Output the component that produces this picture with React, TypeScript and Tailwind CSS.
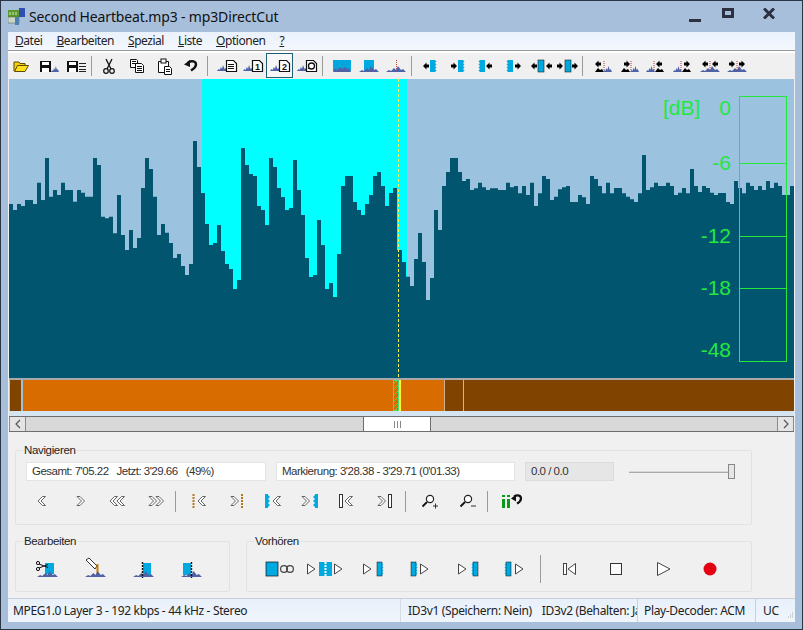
import React from "react";

const A = [222,240,222,228,210,210,222,158,210,84,200,180,195,158,180,180,215,180,188,200,200,84,105,260,265,260,310,195,315,360,300,354,324,174,84,117,200,315,282,308,339,384,372,408,435,402,33,111,189,282,345,339,285,363,402,417,477,450,54,105,132,138,228,240,285,84,111,174,201,240,234,90,180,255,384,441,435,270,345,477,459,501,372,168,138,138,216,240,255,222,195,138,126,168,228,189,174];
const B = [396,440,468,387,309,396,510,444,240,300,168,126,84,84,126,153,147,180,175,158,172,180,175,175,180,180,158,172,168,190,168,195,158,228,190,138,147,210,200,178,172,168,216,216,195,202,222,138,147,168,190,158,190,174,174,190,200,208,216,190,75,180,172,158,168,168,158,168,195,188,174,190,117,168,186,168,174,188,195,189,189,216,222,153,174,190,158,168,180,168,180,153,174,158,168,195,195,168];

function wavePath() {
  let d = "M9 378";
  A.forEach((z, i) => {
    const y = 130 + z / 3;
    d += `V${y}H${9 + 4 * (i + 1)}`;
  });
  d += `V250H402`;
  B.forEach((z, i) => {
    const y = 130 + z / 3;
    d += `V${y}H${402 + 4 * (i + 1)}`;
  });
  d += "V378Z";
  return d;
}

const BLUE = "#00a9e0";
const WAVE = "#4f62a6";

function Ico({ children, w = 26, h = 20 }: { children: React.ReactNode; w?: number; h?: number }) {
  return (
    <svg width={w} height={h} viewBox={`0 0 ${w} ${h}`} className="block shrink-0">
      {children}
    </svg>
  );
}

function W({ x, y, w = 10, c = WAVE }: { x: number; y: number; w?: number; c?: string }) {
  const s = w / 10;
  return (
    <path
      d={`M${x} ${y}l${1.5 * s} -2l${1 * s} 1l${1.5 * s} -3l${1 * s} 2l${1 * s} -4l${1.5 * s} 4l${1 * s} -1l${1.5 * s} 3L${x + w} ${y}z`}
      fill={c}
    />
  );
}

function Floppy({ x, y }: { x: number; y: number }) {
  return (
    <g>
      <rect x={x} y={y} width={11} height={11} fill="#111" />
      <rect x={x + 2} y={y + 1} width={7} height={3} fill="#fff" />
      <rect x={x + 2} y={y + 7} width={7} height={4} fill="#fff" />
    </g>
  );
}

function Doc({ x, y, n }: { x: number; y: number; n?: string }) {
  return (
    <g>
      <path d={`M${x + 0.5} ${y + 0.5}h7l3 3v8h-10z`} fill="#fff" stroke="#111" strokeWidth="1.2" />
      {n ? (
        <text x={x + 5.5} y={y + 9.5} fontSize="9" fontWeight="700" textAnchor="middle" fontFamily="Liberation Sans, sans-serif" fill="#111">
          {n}
        </text>
      ) : (
        <path d={`M${x + 2} ${y + 4.5}h6M${x + 2} ${y + 6.5}h6M${x + 2} ${y + 8.5}h6`} stroke="#111" />
      )}
    </g>
  );
}

function Arrow({ x, y, dir }: { x: number; y: number; dir: "l" | "r" }) {
  return dir === "l" ? (
    <path d={`M${x} ${y}l3.5 -3.5v2h2.500v3h-2.500v2z`} fill="#000" />
  ) : (
    <path d={`M${x} ${y}l-3.5 -3.5v2h-2.500v3h2.500v2z`} fill="#000" />
  );
}

function Jag({ x, y, h = 12, side }: { x: number; y: number; h?: number; side: "l" | "r" }) {
  return (
    <g>
      <rect x={x} y={y} width={5} height={h} fill={BLUE} />
      {side === "r" &&
        [0, 3, 6, 9].map((k) => <path key={k} d={`M${x + 5} ${y + k}l1.5 1.5l-1.5 1.5z`} fill={BLUE} />)}
      {side === "l" &&
        [0, 3, 6, 9].map((k) => <path key={k} d={`M${x} ${y + k}l-1.5 1.5l1.5 1.5z`} fill={BLUE} />)}
    </g>
  );
}

const tb: Record<string, React.ReactNode> = {
  open: (
    <Ico>
      <path d="M6 15V6h5l1 1.5h5V10" fill="#f3cf10" stroke="#5b4a00" />
      <path d="M6.5 15.5l3-6h11l-3.5 6z" fill="#ffe020" stroke="#5b4a00" />
    </Ico>
  ),
  saveW: (
    <Ico>
      <Floppy x={5} y={5} />
      <W x={16} y={16} w={8} />
    </Ico>
  ),
  saveL: (
    <Ico>
      <Floppy x={5} y={5} />
      <path d="M17 7.5h7M17 10.5h7M17 13.5h7M17 15.5h7" stroke="#222" />
    </Ico>
  ),
  cut: (
    <Ico>
      <path d="M10 3l5 10M16 3l-5 10" stroke="#111" strokeWidth="1.3" fill="none" />
      <circle cx="10" cy="15" r="2.3" fill="none" stroke="#111" strokeWidth="1.2" />
      <circle cx="16" cy="15" r="2.3" fill="none" stroke="#111" strokeWidth="1.2" />
    </Ico>
  ),
  copy: (
    <Ico>
      <path d="M6.5 3.5h6l1 1v7h-7z" fill="#fff" stroke="#111" />
      <path d="M8 5.5h4M8 7.5h4" stroke="#111" />
      <path d="M11.5 7.5h6l2 2v7h-8z" fill="#fff" stroke="#111" />
      <path d="M13 10.5h5M13 12.5h5M13 14.5h5" stroke="#111" />
    </Ico>
  ),
  paste: (
    <Ico>
      <path d="M6.5 5.5h10v11h-10z" fill="#fff" stroke="#111" />
      <rect x="9" y="3" width="5" height="4" fill="#fff" stroke="#111" />
      <path d="M12.5 10.5h5l2 2v6h-7z" fill="#fff" stroke="#111" />
      <path d="M14 13.5h4M14 15.5h4" stroke="#111" />
    </Ico>
  ),
  undo: (
    <Ico>
      <path d="M10 6.5c4 -2.5 8 -1 8 2c0 3 -3 4.5 -5 6" fill="none" stroke="#111" strokeWidth="2.4" />
      <path d="M6 8.5l6 -4.5v7z" fill="#111" />
    </Ico>
  ),
  d0: (<Ico><W x={3} y={15} /><Doc x={12} y={4} /></Ico>),
  d1: (<Ico><W x={3} y={15} /><Doc x={12} y={4} n="1" /></Ico>),
  d2: (<Ico><W x={3} y={15} /><Doc x={12} y={4} n="2" /></Ico>),
  d3: (
    <Ico>
      <W x={3} y={15} />
      <Doc x={12} y={4} />
      <circle cx="17.5" cy="10" r="3" fill="#fff" stroke="#111" strokeWidth="1.3" />
    </Ico>
  ),
  s0: (
    <Ico>
      <rect x="4" y="4" width="18" height="11" fill={BLUE} />
      <path d="M4 16l2 -4 2 2 3 -3 2 2 3 -2 2 2 2 -1 2 4z" fill={WAVE} />
      <path d="M8 4v10M13 4v10M18 4v10" stroke="#2787c5" strokeDasharray="1 1" />
    </Ico>
  ),
  s1: (
    <Ico>
      <rect x="8" y="4" width="10" height="11" fill={BLUE} />
      <W x={3} y={16} w={20} />
    </Ico>
  ),
  s2: (
    <Ico>
      <path d="M13.5 4v11" stroke="#c0392b" strokeDasharray="1 1" />
      <W x={3} y={16} w={20} />
    </Ico>
  ),
  a1: (<Ico><Arrow x={7} y={10} dir="l" /><Jag x={14} y={4} side="r" /></Ico>),
  a2: (<Ico><Arrow x={14} y={10} dir="r" /><Jag x={15} y={4} side="r" /></Ico>),
  a3: (<Ico><Jag x={8} y={4} side="l" /><Arrow x={14} y={10} dir="l" /></Ico>),
  a4: (<Ico><Jag x={7} y={4} side="l" /><Arrow x={20} y={10} dir="r" /></Ico>),
  a5: (
    <Ico>
      <Arrow x={3} y={10} dir="l" />
      <rect x="10" y="4" width="6" height="12" fill={BLUE} stroke="#222" strokeWidth="0.6" />
      <Arrow x={18} y={10} dir="l" />
    </Ico>
  ),
  a6: (
    <Ico>
      <Arrow x={8} y={10} dir="r" />
      <rect x="10" y="4" width="6" height="12" fill={BLUE} stroke="#222" strokeWidth="0.6" />
      <Arrow x={23} y={10} dir="r" />
    </Ico>
  ),
  m1: (<Ico><Arrow x={6} y={8} dir="l" /><path d="M6 16l3 -4 2 2 2 -1 2 3z" fill="#000" /><W x={14} y={16} w={9} /><path d="M15 5v9" stroke="#c0392b" strokeDasharray="1 1" /></Ico>),
  m2: (<Ico><Arrow x={14} y={8} dir="r" /><path d="M5 16l3 -4 2 2 2 -1 2 3z" fill="#000" /><W x={14} y={16} w={9} /><path d="M15 5v9" stroke="#c0392b" strokeDasharray="1 1" /></Ico>),
  m3: (<Ico><W x={3} y={16} w={9} /><path d="M11 5v9" stroke="#c0392b" strokeDasharray="1 1" /><Arrow x={13} y={8} dir="l" /><path d="M12 16l3 -4 2 2 2 -1 2 3z" fill="#000" /></Ico>),
  m4: (<Ico><W x={3} y={16} w={9} /><path d="M11 5v9" stroke="#c0392b" strokeDasharray="1 1" /><Arrow x={20} y={8} dir="r" /><path d="M12 16l3 -4 2 2 2 -1 2 3z" fill="#000" /></Ico>),
  m5: (<Ico><W x={3} y={16} w={20} /><path d="M13 5v9" stroke="#c0392b" strokeDasharray="1 1" /><Arrow x={5} y={8} dir="l" /><Arrow x={15} y={8} dir="l" /></Ico>),
  m6: (<Ico><W x={3} y={16} w={20} /><path d="M13 5v9" stroke="#c0392b" strokeDasharray="1 1" /><Arrow x={11} y={8} dir="r" /><Arrow x={21} y={8} dir="r" /></Ico>),
};

function Sep({ h = 20, ml = 0, mr = 0 }: { h?: number; ml?: number; mr?: number }) {
  return <div className="w-[1px] bg-[#9a9a9a] shrink-0" style={{ height: h, marginLeft: ml, marginRight: mr }} />;
}

function TB({ k, w = 27, sel }: { k: string; w?: number; sel?: boolean }) {
  return (
    <div
      className={
        sel
          ? "h-[25px] flex items-center justify-center shrink-0 border border-[#1f5f78] bg-[#f6f6f6]"
          : "h-[25px] flex items-center justify-center shrink-0"
      }
      style={{ width: w }}
    >
      {tb[k]}
    </div>
  );
}

function Chev({ x, y, dir }: { x: number; y: number; dir: "l" | "r" }) {
  const d =
    dir === "l"
      ? `M${x + 4.5} ${y - 4.5}L${x} ${y}L${x + 4.5} ${y + 4.5}H${x + 7.5}L${x + 3} ${y}L${x + 7.5} ${y - 4.5}z`
      : `M${x + 3} ${y - 4.5}L${x + 7.5} ${y}L${x + 3} ${y + 4.5}H${x}L${x + 4.5} ${y}L${x} ${y - 4.5}z`;
  return <path d={d} fill="#fff" stroke="#555" strokeWidth="0.9" />;
}

function Play({ x, y, s = 5 }: { x: number; y: number; s?: number }) {
  return <path d={`M${x + 0.5} ${y - s}L${x + 1.6 * s} ${y}L${x + 0.5} ${y + s}z`} fill="#fff" stroke="#444" />;
}

const nav: React.ReactNode[] = [
  <Ico key="0" w={30}><Chev x={11} y={10} dir="l" /></Ico>,
  <Ico key="1" w={30}><Chev x={12} y={10} dir="r" /></Ico>,
  <Ico key="2" w={30}><Chev x={7} y={10} dir="l" /><Chev x={14} y={10} dir="l" /></Ico>,
  <Ico key="3" w={30}><Chev x={8} y={10} dir="r" /><Chev x={15} y={10} dir="r" /></Ico>,
];
const nav2: React.ReactNode[] = [
  <Ico key="0" w={30}><path d="M9.5 3v14" stroke="#b5771c" strokeWidth="2" strokeDasharray="2 1" /><Chev x={14} y={10} dir="l" /></Ico>,
  <Ico key="1" w={30}><Chev x={10} y={10} dir="r" /><path d="M21 3v14" stroke="#b5771c" strokeWidth="2" strokeDasharray="2 1" /></Ico>,
  <Ico key="2" w={30}><rect x="7" y="3" width="3" height="14" fill={BLUE} /><path d="M10 4l2 2-2 2 2 2-2 2 2 2-2 2z" fill={BLUE} /><Chev x={15} y={10} dir="l" /></Ico>,
  <Ico key="3" w={30}><Chev x={7} y={10} dir="r" /><rect x="20" y="3" width="3" height="14" fill={BLUE} /><path d="M20 4l-2 2 2 2-2 2 2 2-2 2 2 2z" fill={BLUE} /></Ico>,
  <Ico key="4" w={30}><rect x="7.5" y="3.5" width="3" height="13" fill="#fff" stroke="#333" /><Chev x={13} y={10} dir="l" /></Ico>,
  <Ico key="5" w={30}><Chev x={9} y={10} dir="r" /><rect x="19.5" y="3.5" width="3" height="13" fill="#fff" stroke="#333" /></Ico>,
];

function Mag({ sign }: { sign: "+" | "-" }) {
  return (
    <Ico w={30}>
      <circle cx="15" cy="8" r="3.600" fill="#fff" stroke="#222" strokeWidth="1.2" />
      <path d="M12 11l-4.500 4.500" stroke="#111" strokeWidth="1.800" />
      {sign === "+" ? <path d="M18 15h5M20.5 12.5v5" stroke="#333" /> : <path d="M18 15h5" stroke="#333" />}
    </Ico>
  );
}

const greenLabel = "absolute top-[16px] text-[21px] leading-[26px] text-[#22e83c] font-['Liberation_Sans',sans-serif]";

function Pane() {
  return (
    <div className="relative h-[299px] mx-[1px] overflow-hidden bg-[#9bc2df] shrink-0">
      <svg width={785} height={299} viewBox="9 79 785 299" className="block">
        <rect x="202" y="79" width="205" height="299" fill="#00ffff" />
        <path d={wavePath()} fill="#01556f" />
        <path d="M398.5 79V378" stroke="#f2f25a" strokeDasharray="3 2" />
        <g fill="none" stroke="#22e83c">
          <rect x="739.5" y="96.5" width="47" height="265" />
          <path d="M739 163.5h48M739 236.5h48M739 288.5h48M762 361.5v-1" />
        </g>
      </svg>
      <span className={`${greenLabel} left-[654px]`}>[dB]</span>
      <span className={`${greenLabel} right-[63px]`}>0</span>
      <span className={`${greenLabel} right-[63px] !top-[71px]`}>-6</span>
      <span className={`${greenLabel} right-[63px] !top-[144px]`}>-12</span>
      <span className={`${greenLabel} right-[63px] !top-[196px]`}>-18</span>
      <span className={`${greenLabel} right-[63px] !top-[258px]`}>-48</span>
    </div>
  );
}

function Strip() {
  return (
    <div className="h-[33px] border-t-[2px] border-[#a9a9a9] bg-[#a9c5dc] flex mx-[1px] shrink-0">
      <div className="w-[1px] bg-[#a9c5dc]" />
      <div className="w-[11px] bg-[#804400]" />
      <div className="w-[2px] bg-[#9bc2df]" />
      <div className="w-[370px] bg-[#d86c00]" />
      <svg width="8" height="31" viewBox="0 0 8 31" className="block shrink-0">
        <rect width="8" height="31" fill="#d86c00" />
        <path d="M0 4l5 -4M0 10l5 -5M0 16l5 -5M0 22l5 -5M0 28l5 -5M1 31l4 -4" stroke="#6fc850" />
        <rect x="0.500" y="0.500" width="5" height="30" fill="none" stroke="#46e070" />
        <rect x="6" y="0" width="2" height="31" fill="#ffff20" />
      </svg>
      <div className="w-[43px] bg-[#d86c00]" />
      <div className="w-[1px] bg-[#c8b090]" />
      <div className="w-[18px] bg-[#804400]" />
      <div className="w-[1px] bg-[#9bc2df]" />
      <div className="flex-1 bg-[#804400]" />
    </div>
  );
}

function Scroll() {
  return (
    <div className="h-[16px] mx-[1px] flex border-y border-[#6e6e6e] bg-[#d8d8d8] shrink-0">
      <div className="w-[17px] bg-[#e4e4e4] border-x border-[#8a8a8a] flex items-center justify-center text-[#666]">
        <svg width="8" height="10" viewBox="0 0 8 10"><path d="M6 1L2 5l4 4" fill="none" stroke="#555" strokeWidth="1.2" /></svg>
      </div>
      <div className="w-[337px]" />
      <div className="w-[68px] bg-white border-x border-[#6e6e6e] flex items-center justify-center">
        <div className="w-[7px] h-[7px] border-x border-[#888] flex justify-center"><div className="w-[1px] bg-[#888]" /></div>
      </div>
      <div className="flex-1" />
      <div className="w-[17px] bg-[#e4e4e4] border-x border-[#8a8a8a] flex items-center justify-center">
        <svg width="8" height="10" viewBox="0 0 8 10"><path d="M2 1l4 4-4 4" fill="none" stroke="#555" strokeWidth="1.2" /></svg>
      </div>
    </div>
  );
}

const legendCls = "px-[1px] text-[11.5px] leading-[14px] text-[#222] font-['Liberation_Sans',sans-serif] tracking-[-0.35px]";
const fieldCls = "h-[19px] flex items-center pl-[5px] text-[11.5px] text-[#333] font-['Liberation_Sans',sans-serif] tracking-[-0.5px] whitespace-pre overflow-hidden";

function Navigate() {
  return (
    <fieldset className="w-[737px] h-[82px] border border-[#e2e2e2] rounded-[2px] pl-[10px]">
      <legend className={`${legendCls} -ml-[3px]`}>Navigieren</legend>
      <div className="flex items-center mt-[5px]">
        <div className={`${fieldCls} w-[240px] bg-white border-[1px] border-[#e4e4e4]`}>Gesamt: 7'05.22   Jetzt: 3'29.66   (49%)</div>
        <div className={`${fieldCls} w-[239px] ml-[10px] bg-white border-[1px] border-[#e4e4e4]`}>Markierung: 3'28.38 - 3'29.71 (0'01.33)</div>
        <div className={`${fieldCls} w-[89px] ml-[10px] bg-[#e6e6e6] border-[1px] border-[#dcdcdc]`}>0.0 / 0.0</div>
        <div className="relative w-[106px] h-[15px] ml-[15px] flex items-center">
          <div className="w-full h-[2px] bg-[#d8d8d8] border-b border-[#aaa]" />
          <div className="absolute right-0 top-0 w-[7px] h-[15px] bg-[#e6e6e6] border border-[#888]" />
        </div>
      </div>
      <div className="flex items-center mt-[9px] h-[22px] -ml-[3px]">
        {nav.map((n, i) => (
          <div key={i} className="w-[38px] flex justify-center shrink-0">{n}</div>
        ))}
        <Sep h={21} mr={4} />
        {nav2.map((n, i) => (
          <div key={i} className="w-[37px] flex justify-center shrink-0">{n}</div>
        ))}
        <Sep h={21} ml={3} mr={5} />
        <div className="w-[38px] flex justify-center shrink-0"><Mag sign="+" /></div>
        <div className="w-[38px] flex justify-center shrink-0"><Mag sign="-" /></div>
        <Sep h={21} mr={5} />
        <div className="w-[38px] flex justify-center shrink-0">
          <Ico w={30}>
            <path d="M5 8h3v9H5zM10 8h3v9h-3z" fill="#0a9a1a" />
            <path d="M5 4h3v2H5zM10 4h3v2h-3z" fill="#0a9a1a" />
            <path d="M17 5.5c4 -2 7 -1 7 2c0 3 -2 4 -4 5" fill="none" stroke="#111" strokeWidth="2.2" />
            <path d="M14 7.5l5 -4v7z" fill="#111" />
          </Ico>
        </div>
      </div>
    </fieldset>
  );
}

const edit: React.ReactNode[] = [
  <Ico key="0" w={30} h={24}><rect x="13" y="6" width="9" height="11" fill={BLUE} /><W x={5} y={20} w={21} /><circle cx="6" cy="6" r="1.6" fill="none" stroke="#111" /><circle cx="6" cy="12" r="1.6" fill="none" stroke="#111" /><path d="M7 7l9 3.5M7 11l9 -3.5" stroke="#111" /></Ico>,
  <Ico key="1" w={30} h={24}><path d="M6 3l3 -2 8 8 -2 3z" fill="#fff" stroke="#333" /><path d="M17.5 7v12" stroke="#c77f00" strokeWidth="2" /><W x={5} y={20} w={21} /></Ico>,
  <Ico key="2" w={30} h={24}><rect x="15" y="6" width="8" height="12" fill={BLUE} /><W x={5} y={20} w={21} /><path d="M14.5 5v16" stroke="#111" strokeWidth="1.4" strokeDasharray="2 1" /></Ico>,
  <Ico key="3" w={30} h={24}><rect x="7" y="6" width="8" height="12" fill={BLUE} /><W x={5} y={20} w={21} /><path d="M15.5 5v16" stroke="#111" strokeWidth="1.4" strokeDasharray="2 1" /></Ico>,
];

function Edit() {
  return (
    <fieldset className="w-[215px] h-[58px] border border-[#e2e2e2] rounded-[2px] pl-[7px] shrink-0">
      <legend className={legendCls}>Bearbeiten</legend>
      <div className="flex mt-[9px]">
        {edit.map((n, i) => (
          <div key={i} className="w-[48px] flex justify-center shrink-0">{n}</div>
        ))}
      </div>
    </fieldset>
  );
}

const pre: React.ReactNode[] = [
  <Ico key="0" w={34} h={20}><rect x="3" y="3" width="12" height="14" fill={BLUE} stroke="#111" strokeWidth="0.7" /><circle cx="21" cy="10" r="3.4" fill="none" stroke="#444" strokeWidth="1.2" /><circle cx="27" cy="10" r="3.4" fill="none" stroke="#444" strokeWidth="1.2" /></Ico>,
  <Ico key="1" w={42} h={20}><Play x={1} y={10} /><rect x="13" y="3" width="13" height="14" fill={BLUE} /><path d="M19.5 3v14" stroke="#fff" strokeWidth="2" strokeDasharray="2 1" /><Play x={28} y={10} /></Ico>,
  <Ico key="2" w={28} h={20}><Play x={3} y={10} /><rect x="17" y="3" width="5" height="14" fill={BLUE} stroke="#111" strokeWidth="0.5" /><path d="M22 4l1.5 1.5L22 7l1.5 1.5L22 10l1.5 1.5L22 13l1.5 1.5L22 16z" fill={BLUE} /></Ico>,
  <Ico key="3" w={28} h={20}><rect x="4" y="3" width="5" height="14" fill={BLUE} stroke="#111" strokeWidth="0.5" /><path d="M9 4l1.5 1.5L9 7l1.5 1.5L9 10l1.5 1.5L9 13l1.5 1.5L9 16z" fill={BLUE} /><Play x={13} y={10} /></Ico>,
  <Ico key="4" w={28} h={20}><Play x={4} y={10} /><rect x="19" y="3" width="5" height="14" fill={BLUE} stroke="#111" strokeWidth="0.5" /><path d="M19 4l-1.5 1.5L19 7l-1.5 1.5L19 10l-1.5 1.5L19 13l-1.5 1.5L19 16z" fill={BLUE} /></Ico>,
  <Ico key="5" w={28} h={20}><rect x="5" y="3" width="5" height="14" fill={BLUE} stroke="#111" strokeWidth="0.5" /><path d="M5 4L3.500 5.500L5 7L3.500 8.500L5 10L3.500 11.500L5 13L3.500 14.500L5 16z" fill={BLUE} /><Play x={14} y={10} /></Ico>,
];

function Pre() {
  return (
    <fieldset className="w-[506px] h-[58px] ml-[16px] border border-[#e2e2e2] rounded-[2px] pl-[9px] shrink-0">
      <legend className={`${legendCls} -ml-[2px]`}>Vorhören</legend>
      <div className="flex items-center mt-[7px]">
        {pre.map((n, i) => (
          <div key={i} className="w-[47px] flex justify-center shrink-0">{n}</div>
        ))}
        <Sep h={28} ml={2} mr={4} />
        <div className="w-[47px] flex justify-center shrink-0">
          <Ico w={24}><rect x="6.500" y="4.500" width="3" height="11" fill="#fff" stroke="#444" /><path d="M18.500 4.500L11 10l7.500 5.500z" fill="#fff" stroke="#444" /></Ico>
        </div>
        <div className="w-[47px] flex justify-center shrink-0">
          <Ico w={24}><rect x="6.500" y="4.500" width="11" height="11" fill="#fafafa" stroke="#333" /></Ico>
        </div>
        <div className="w-[47px] flex justify-center shrink-0">
          <Ico w={24}><path d="M6.500 3.500L19 10L6.500 16.500z" fill="#fff" stroke="#444" /></Ico>
        </div>
        <div className="w-[47px] flex justify-center shrink-0">
          <Ico w={24}><circle cx="12" cy="10" r="6.500" fill="#e60012" /></Ico>
        </div>
      </div>
    </fieldset>
  );
}

function MenuItem({ first, rest }: { first: string; rest: string }) {
  return (
    <span className="mr-[14px]">
      <span className="underline">{first}</span>
      {rest}
    </span>
  );
}

export default function App() {
  return (
    <div className="relative w-[803px] h-[630px] overflow-hidden bg-[#a7bfdb] border-t border-[#2a3644] border-x border-b font-['Noto_Sans','Open_Sans',sans-serif]">
      <div className="h-[31px] flex items-center pl-[7px] shrink-0">
        <svg width="18" height="18" viewBox="0 0 18 18" className="shrink-0">
          <rect x="0" y="2" width="11" height="7" fill="#5a9a2a" />
          <path d="M2 4v3M5 4v3M8 4v3" stroke="#dfe8d0" />
          <rect x="0" y="9" width="11" height="6" fill="#c8d8c8" stroke="#555" strokeWidth="0.5" />
          <rect x="11" y="0" width="6" height="9" fill="#2f4fb0" />
          <rect x="7" y="9" width="4" height="8" fill="#4f7fb0" />
        </svg>
        <span className="ml-[3px] text-[14px] text-[#111] leading-[20px] tracking-[-0.15px]">Second Heartbeat.mp3 - mp3DirectCut</span>
        <div className="ml-auto flex items-center pr-[27px] text-[#2b3140]">
          <div className="w-[12px] h-[3px] mt-[7px] bg-[#2b3140]" />
          <div className="ml-[21px] w-[12px] h-[10px] border-[3px] border-[#2b3140] mb-[7px]" />
          <svg width="12" height="11" viewBox="0 0 12 11" className="ml-[29px] mb-[6px]"><path d="M1 0.500L11 10.500M11 0.500L1 10.500" stroke="#2b3140" strokeWidth="3" /></svg>
        </div>
      </div>
      <div className="mx-[7px] h-[590px] flex flex-col bg-[#f0f0f0]">
        <div className="h-[18px] flex items-center pl-[7px] bg-gradient-to-b from-[#eaf2fd] to-[#f3f7fd] text-[12px] tracking-[-0.45px] text-[#222] shrink-0">
          <MenuItem first="D" rest="atei" />
          <MenuItem first="B" rest="earbeiten" />
          <MenuItem first="S" rest="pezial" />
          <MenuItem first="L" rest="iste" />
          <MenuItem first="O" rest="ptionen" />
          <MenuItem first="?" rest="" />
        </div>
        <div className="h-[3px] border-t-[1px] border-[#9a9a9a] bg-white shrink-0" />
        <div className="h-[26px] flex items-center pb-[1px] shrink-0">
          <TB k="open" w={26} />
          <TB k="saveW" />
          <TB k="saveL" />
          <Sep ml={3} mr={3} />
          <TB k="cut" />
          <TB k="copy" w={30} />
          <TB k="paste" w={26} />
          <TB k="undo" w={26} />
          <Sep ml={3} mr={5} />
          <TB k="d0" />
          <TB k="d1" w={26} />
          <TB k="d2" sel />
          <TB k="d3" w={28} />
          <Sep ml={1} mr={5} />
          <TB k="s0" />
          <TB k="s1" />
          <TB k="s2" />
          <Sep ml={2} mr={3} />
          <TB k="a1" />
          <TB k="a2" />
          <TB k="a3" w={32} />
          <TB k="a4" w={26} />
          <TB k="a5" />
          <TB k="a6" />
          <Sep ml={1} mr={5} />
          <TB k="m1" />
          <TB k="m2" />
          <TB k="m3" />
          <TB k="m4" />
          <TB k="m5" />
          <TB k="m6" />
        </div>
        <Pane />
        <Strip />
        <div className="h-[5px] mx-[1px] bg-[#d4e4f0] shrink-0" />
        <Scroll />
        <div className="flex-1 flex flex-col pl-[7px] pt-[11px] min-h-0">
          <Navigate />
          <div className="flex mt-[9px]">
            <Edit />
            <Pre />
          </div>
        </div>
        <div className="relative h-[24px] flex items-center border-t border-[#c8cfd8] bg-gradient-to-b from-[#e8f0fa] to-[#f0f5fb] text-[12px] tracking-[-0.35px] text-[#222] shrink-0">
          <div className="w-[392px] pl-[5px] whitespace-nowrap">MPEG1.0 Layer 3 - 192 kbps - 44 kHz - Stereo</div>
          <div className="w-[237px] pl-[7px] border-l border-[#d4dce6] h-full flex items-center whitespace-nowrap overflow-hidden">
            <span className="mr-[10px]">ID3v1 (Speichern: Nein)</span>
            <span>ID3v2 (Behalten: Ja)</span>
          </div>
          <div className="w-[118px] pl-[6px] border-l border-[#c8d0da] h-full flex items-center whitespace-nowrap">Play-Decoder: ACM</div>
          <div className="flex-1 pl-[7px] border-l border-[#c8d0da] h-full flex items-center">UC</div>
          <svg width="8" height="8" viewBox="0 0 8 8" className="absolute right-[1px] bottom-[2px]">
            <path d="M6 1h1M4 3h1M6 3h1M2 5h1M4 5h1M6 5h1" stroke="#a8b0ba" />
          </svg>
        </div>
      </div>
    </div>
  );
}
